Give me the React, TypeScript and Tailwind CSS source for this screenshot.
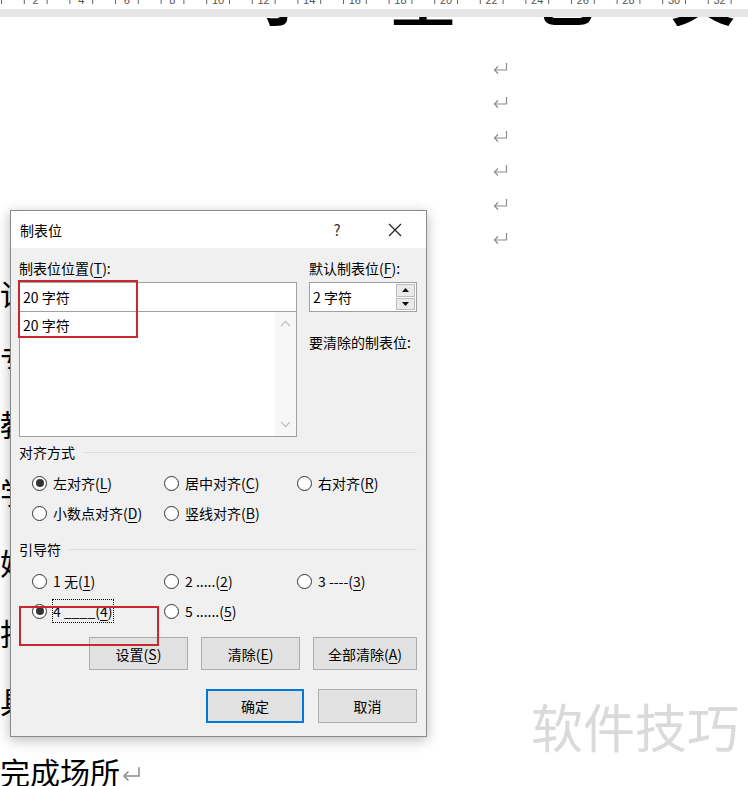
import React from 'react';

const FONT = "font-['Noto_Sans_CJK_SC',sans-serif]";

function ReturnMark({ w = 15, h = 12 }: { w?: number; h?: number }) {
  return (
    <svg width={w} height={h} viewBox="0 0 15 12" fill="none" stroke="#8c8c8c" strokeWidth="1.2">
      <path d="M13.5 1 V8 H1.5" />
      <path d="M5 4.5 L1.5 8 L5 11.5" />
    </svg>
  );
}

function Ruler() {
  const ticks = Array.from({ length: 33 }, (_, i) => 1.5 + i * 22.8);
  const nums = Array.from({ length: 16 }, (_, i) => ({ x: 35.6 + i * 45.6, n: (i + 1) * 2 }));
  return (
    <svg width="748" height="9" className="block">
      {ticks.map((x) => (
        <line key={x} x1={x} y1="0" x2={x} y2="4" stroke="#666" strokeWidth="1" />
      ))}
      {nums.map((t) => (
        <text key={t.n} x={t.x} y="4" fontSize="11" textAnchor="middle" fill="#555" fontFamily="Liberation Sans, sans-serif">
          {t.n}
        </text>
      ))}
    </svg>
  );
}

function U({ children }: { children: React.ReactNode }) {
  return <span className="underline underline-offset-[3px] decoration-1">{children}</span>;
}

interface RadioProps {
  label: React.ReactNode;
  checked?: boolean;
  focused?: boolean;
}

function Radio({ label, checked, focused }: RadioProps) {
  return (
    <div className="flex h-[30px] items-center">
      <span className="flex h-[15px] w-[15px] shrink-0 items-center justify-center rounded-full border border-[#333] bg-white">
        {checked && <span className="h-[8px] w-[8px] rounded-full bg-[#333]" />}
      </span>
      {focused ? (
        <span className="ml-[5px] flex h-[24px] items-center border border-dotted border-black pr-[1px]">{label}</span>
      ) : (
        <span className="ml-[6px]">{label}</span>
      )}
    </div>
  );
}

function SectionTitle({ children, className }: { children: React.ReactNode; className?: string }) {
  return (
    <div className={'flex h-[18px] items-center gap-[8px] ' + (className ?? '')}>
      <span>{children}</span>
      <span className="h-px flex-1 bg-[#dcdcdc]" />
    </div>
  );
}

function Btn({ children, w, primary }: { children: React.ReactNode; w: string; primary?: boolean }) {
  return (
    <div
      className={
        'flex items-center justify-center bg-[#e1e1e1] ' +
        w +
        (primary ? ' h-[34px] border-2 border-[#0078d7]' : ' border border-[#adadad]')
      }
    >
      {children}
    </div>
  );
}

function TabDialog() {
  return (
    <div className="absolute left-[10px] top-[210px] flex h-[527px] w-[417px] flex-col border border-[#8a8a8a] bg-[#f0f0f0] text-[14px] leading-[18px] text-black shadow-[0_3px_12px_rgba(0,0,0,0.28)]">
      <div className="flex h-[37px] items-center bg-white">
        <span className="flex-1 pl-[9px]">制表位</span>
        <span className="w-[58px] text-center text-[15px] text-[#333]">?</span>
        <span className="mr-[2px] flex w-[58px] justify-center">
          <svg width="14" height="14" viewBox="0 0 14 14" stroke="#222" strokeWidth="1.2">
            <path d="M1 1 L13 13 M13 1 L1 13" />
          </svg>
        </span>
      </div>

      <div className="flex flex-1 flex-col pl-[8px] pr-[9px]">
        <div className="mt-[11px] flex gap-[12px]">
          <div className="flex w-[278px] flex-col">
            <div className="h-[18px]">
              制表位位置(<U>T</U>):
            </div>
            <div className="mt-[5px] flex h-[30px] items-center border border-[#a0a0a0] bg-white pl-[3px]">20 字符</div>
            <div className="flex h-[125px] border border-t-0 border-[#a0a0a0] bg-white">
              <div className="flex-1 pl-[3px] pt-[4px]">20 字符</div>
              <div className="flex w-[21px] flex-col items-center justify-between bg-[#f7f7f7] py-[8px]">
                <svg width="11" height="7" viewBox="0 0 11 7" fill="none" stroke="#c2c2c2" strokeWidth="1.3">
                  <path d="M1 6 L5.5 1.5 L10 6" />
                </svg>
                <svg width="11" height="7" viewBox="0 0 11 7" fill="none" stroke="#c2c2c2" strokeWidth="1.3">
                  <path d="M1 1 L5.5 5.5 L10 1" />
                </svg>
              </div>
            </div>
          </div>
          <div className="flex w-[108px] flex-col">
            <div className="h-[18px]">
              默认制表位(<U>F</U>):
            </div>
            <div className="mt-[5px] flex h-[30px] border border-[#a0a0a0] bg-white">
              <div className="flex flex-1 items-center pl-[3px]">2 字符</div>
              <div className="my-[1px] mr-[1px] flex w-[19px] flex-col gap-px">
                <div className="flex flex-1 items-center justify-center border border-[#bcbcbc] bg-[#eaeaea]">
                  <svg width="7" height="4" viewBox="0 0 7 4">
                    <path d="M0 4 L3.5 0 L7 4 Z" fill="#111" />
                  </svg>
                </div>
                <div className="flex flex-1 items-center justify-center border border-[#bcbcbc] bg-[#eaeaea]">
                  <svg width="7" height="4" viewBox="0 0 7 4">
                    <path d="M0 0 L3.5 4 L7 0 Z" fill="#111" />
                  </svg>
                </div>
              </div>
            </div>
            <div className="mt-[21px] h-[18px]">要清除的制表位:</div>
          </div>
        </div>

        <SectionTitle className="mt-[6px]">对齐方式</SectionTitle>
        <div className="mt-[7px] grid grid-cols-[132px_133px_1fr] pl-[13px]">
          <Radio
            checked
            label={
              <>
                左对齐(<U>L</U>)
              </>
            }
          />
          <Radio
            label={
              <>
                居中对齐(<U>C</U>)
              </>
            }
          />
          <Radio
            label={
              <>
                右对齐(<U>R</U>)
              </>
            }
          />
          <Radio
            label={
              <>
                小数点对齐(<U>D</U>)
              </>
            }
          />
          <Radio
            label={
              <>
                竖线对齐(<U>B</U>)
              </>
            }
          />
        </div>

        <SectionTitle className="mt-[12px]">引导符</SectionTitle>
        <div className="mt-[8px] grid grid-cols-[132px_133px_1fr] pl-[13px]">
          <Radio
            label={
              <>
                1 无(<U>1</U>)
              </>
            }
          />
          <Radio
            label={
              <>
                2 .....(<U>2</U>)
              </>
            }
          />
          <Radio
            label={
              <>
                3 ----(<U>3</U>)
              </>
            }
          />
          <Radio
            checked
            focused
            label={
              <>
                4 ____(<U>4</U>)
              </>
            }
          />
          <Radio
            label={
              <>
                5 ......(<U>5</U>)
              </>
            }
          />
        </div>

        <div className="mt-[11px] flex h-[33px] justify-end gap-[13px]">
          <Btn w="w-[99px]">
            设置(<U>S</U>)
          </Btn>
          <Btn w="w-[99px]">
            清除(<U>E</U>)
          </Btn>
          <Btn w="w-[104px]">
            全部清除(<U>A</U>)
          </Btn>
        </div>

        <div className="mt-[19px] flex h-[34px] justify-end gap-[14px]">
          <Btn w="w-[98px]" primary>
            确定
          </Btn>
          <Btn w="w-[99px]">取消</Btn>
        </div>
      </div>
    </div>
  );
}

const lines: { text: string; h: string }[] = [
  { text: '论文题目', h: 'h-[64px]' },
  { text: '专业名称', h: 'h-[65px]' },
  { text: '教学单位', h: 'h-[66px]' },
  { text: '学生学号', h: 'h-[70px]' },
  { text: '姓名', h: 'h-[72px]' },
  { text: '指导教师', h: 'h-[67px]' },
  { text: '具体要求', h: 'h-[69px]' },
];

export default function App() {
  return (
    <div className={'relative h-[786px] w-[748px] overflow-hidden bg-white ' + FONT}>
      <Ruler />
      <div className="h-[8px] bg-[#e6e6e6]" />

      <div className="h-[9px] overflow-hidden">
        <div className="-mt-[57px] flex gap-[76px] pl-[251px] text-[64px] font-bold leading-[64px] text-black">
          <span>子</span>
          <span>量</span>
          <span>也</span>
          <span>文</span>
        </div>
      </div>

      <div className="mt-[25px] flex flex-col">
        {Array.from({ length: 6 }).map((_, i) => (
          <div key={i} className="flex h-[34px] items-center pl-[493px]">
            <ReturnMark />
          </div>
        ))}
      </div>

      <div className="mt-[6px] flex flex-col text-[30px] leading-none text-black">
        {lines.map((l) => (
          <div key={l.text} className={'flex items-center ' + l.h}>
            {l.text}
          </div>
        ))}
        <div className="flex h-[74px] items-center">
          <span>完成场所</span>
          <span className="ml-[2px] mt-[4px]">
            <ReturnMark w={19} h={15} />
          </span>
        </div>
      </div>

      <TabDialog />

      <div className="absolute left-[18px] top-[280px] h-[58px] w-[120px] border-2 border-[#c8282e]" />
      <div className="absolute left-[19px] top-[606px] h-[40px] w-[140px] border-2 border-[#c8282e]" />

      <div className="absolute left-[531px] top-[700px] text-[52px] leading-none text-[#dadada]">软件技巧</div>
    </div>
  );
}
